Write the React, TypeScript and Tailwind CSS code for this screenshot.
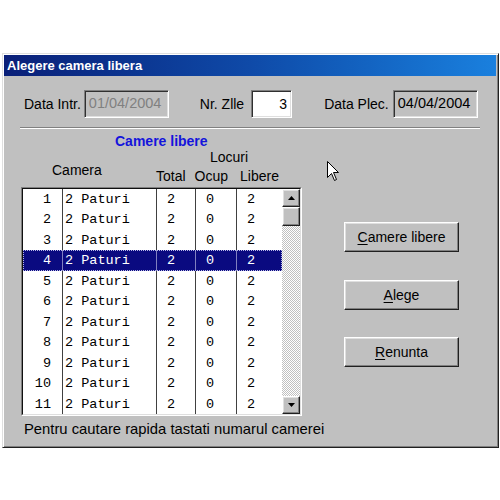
import React from 'react';

type Row = { nr: number; tip: string; total: number; ocup: number; libere: number };

const rows: Row[] = Array.from({ length: 11 }, (_, i) => ({ nr: i + 1, tip: '2 Paturi', total: 2, ocup: 0, libere: 2 }));

const raised =
  'border border-t-white border-l-white border-b-[#202020] border-r-[#202020] shadow-[inset_-1px_-1px_0_#808080,inset_1px_1px_0_#dfdfdf] bg-[#c0c0c0]';
const sunken =
  'border border-t-[#808080] border-l-[#808080] border-b-white border-r-white shadow-[inset_1px_1px_0_#303030,inset_-1px_-1px_0_#dfdfdf]';

function Button({ label }: { label: string }) {
  return (
    <button className={`w-[115px] h-[30px] ${raised} text-[14px] text-black flex items-center justify-center`}>
      <span className="underline underline-offset-2">{label[0]}</span>
      {label.slice(1)}
    </button>
  );
}

function Arrow({ up }: { up?: boolean }) {
  return (
    <svg width="7" height="4" viewBox="0 0 7 4">
      <path d={up ? 'M3.5 0 L7 4 L0 4 Z' : 'M0 0 L7 0 L3.5 4 Z'} fill="#000" />
    </svg>
  );
}

function Table() {
  return (
    <div className="ml-[17px] w-[281px] border border-t-[#808080] border-l-[#808080] border-b-white border-r-white">
      <div className="flex border border-t-[#101010] border-l-[#101010] border-b-[#dfdfdf] border-r-[#dfdfdf] bg-white">
        <div className="w-[259px] font-['Liberation_Mono',monospace] text-[13.5px]">
          {rows.map((r, i) => {
            const sel = r.nr === 4;
            const h = i % 2 === 0 ? 'h-[20px]' : 'h-[21px]';
            const line = sel ? 'border-[#8080c0]' : 'border-[#404040]';
            return (
              <div
                key={r.nr}
                className={`flex ${h} items-center ${sel ? 'bg-[#0a0a80] text-white outline outline-1 outline-dotted outline-[#b8b8e8] -outline-offset-1' : 'text-black'}`}
              >
                <div className={`w-[40px] h-full flex items-center justify-end pt-[2px] pr-[11px] border-r ${line}`}>{r.nr}</div>
                <div className={`w-[94px] h-full flex items-center pt-[2px] pl-[2px] border-r ${line} whitespace-pre`}>{r.tip}</div>
                <div className={`w-[39px] h-full flex items-center pt-[2px] pl-[10px] border-r ${line}`}>{r.total}</div>
                <div className={`w-[41px] h-full flex items-center pt-[2px] pl-[10px] border-r ${line}`}>{r.ocup}</div>
                <div className="w-[45px] h-full flex items-center pt-[2px] pl-[10px]">{r.libere}</div>
              </div>
            );
          })}
        </div>
        <div className="w-[18px] flex flex-col">
          <div className={`h-[18px] ${raised} flex items-center justify-center`}>
            <Arrow up />
          </div>
          <div className={`h-[19px] ${raised}`} />
          <div className="flex-1 bg-[repeating-conic-gradient(#ffffff_0%_25%,#c0c0c0_0%_50%)] bg-[length:2px_2px]" />
          <div className={`h-[18px] ${raised} flex items-center justify-center`}>
            <Arrow />
          </div>
        </div>
      </div>
    </div>
  );
}

export default function App() {
  return (
    <div className="w-[500px] h-[500px] bg-white pt-[53px] pl-[2px] font-['Liberation_Sans',Arial,sans-serif]">
      <div className="relative w-[497px] h-[395px] bg-[#c0c0c0] p-[1px] border border-[#dfdfdf] border-b-[#202020] border-r-[#202020] shadow-[inset_1px_1px_0_#ffffff,inset_-1px_-1px_0_#808080]">
        <div className="h-[21px] mr-[1px] bg-gradient-to-r from-[#0a1f78] via-[#0f4aa8] to-[#1a80de] text-white font-bold text-[13px] leading-[21px] pl-[3px]">
          Alegere camera libera
        </div>

        <div className="mt-[14px] h-[28px] flex items-center text-[14px] text-black">
          <span className="ml-[20px]">Data Intr.</span>
          <div className={`ml-[3px] w-[85px] h-[28px] ${sunken} flex items-center pl-[4px] text-[#808080] text-[14.5px]`}>01/04/2004</div>
          <span className="ml-[31px]">Nr. Zlle</span>
          <div className={`ml-[7px] w-[41px] h-[28px] ${sunken} bg-white flex items-center justify-end pr-[4px]`}>3</div>
          <span className="ml-[32px]">Data Plec.</span>
          <div className={`ml-[4px] w-[85px] h-[28px] ${sunken} flex items-center pl-[4px] text-[14.5px]`}>04/04/2004</div>
        </div>

        <div className="mt-[9px] ml-[16px] w-[460px] h-[2px] border-t border-t-[#808080] border-b border-b-white" />

        <div className="flex">
          <div className="w-[300px]">
            <div className="mt-[4px] ml-[111px] text-[14px] leading-[16px] font-bold text-[#1414dc]">Camere libere</div>
            <div className="flex text-[14px] leading-[16px] text-black">
              <div className="w-[152px] pt-[13px] pl-[48px]">Camera</div>
              <div>
                <div className="pl-[54px]">Locuri</div>
                <div className="mt-[3px] flex">
                  <span>Total</span>
                  <span className="ml-[9px]">Ocup</span>
                  <span className="ml-[12px]">Libere</span>
                </div>
              </div>
            </div>
            <div className="mt-[3px]">
              <Table />
            </div>
          </div>
          <div className="ml-[40px] pt-[93px] flex flex-col">
            <Button label="Camere libere" />
            <div className="mt-[28px]">
              <Button label="Alege" />
            </div>
            <div className="mt-[27px]">
              <Button label="Renunta" />
            </div>
          </div>
        </div>

        <div className="mt-[5px] ml-[20px] text-[14.8px] leading-[17px] text-black whitespace-nowrap">
          Pentru cautare rapida tastati numarul camerei
        </div>

        <svg className="absolute left-[324px] top-[107px]" width="13" height="21" viewBox="0 0 13 21">
          <path d="M0.5 0.5 L0.5 16.5 L4.5 12.5 L7.5 19.5 L9.5 18.5 L6.5 11.5 L11.5 11.5 Z" fill="#fff" stroke="#000" strokeWidth="1" />
        </svg>
      </div>
    </div>
  );
}
